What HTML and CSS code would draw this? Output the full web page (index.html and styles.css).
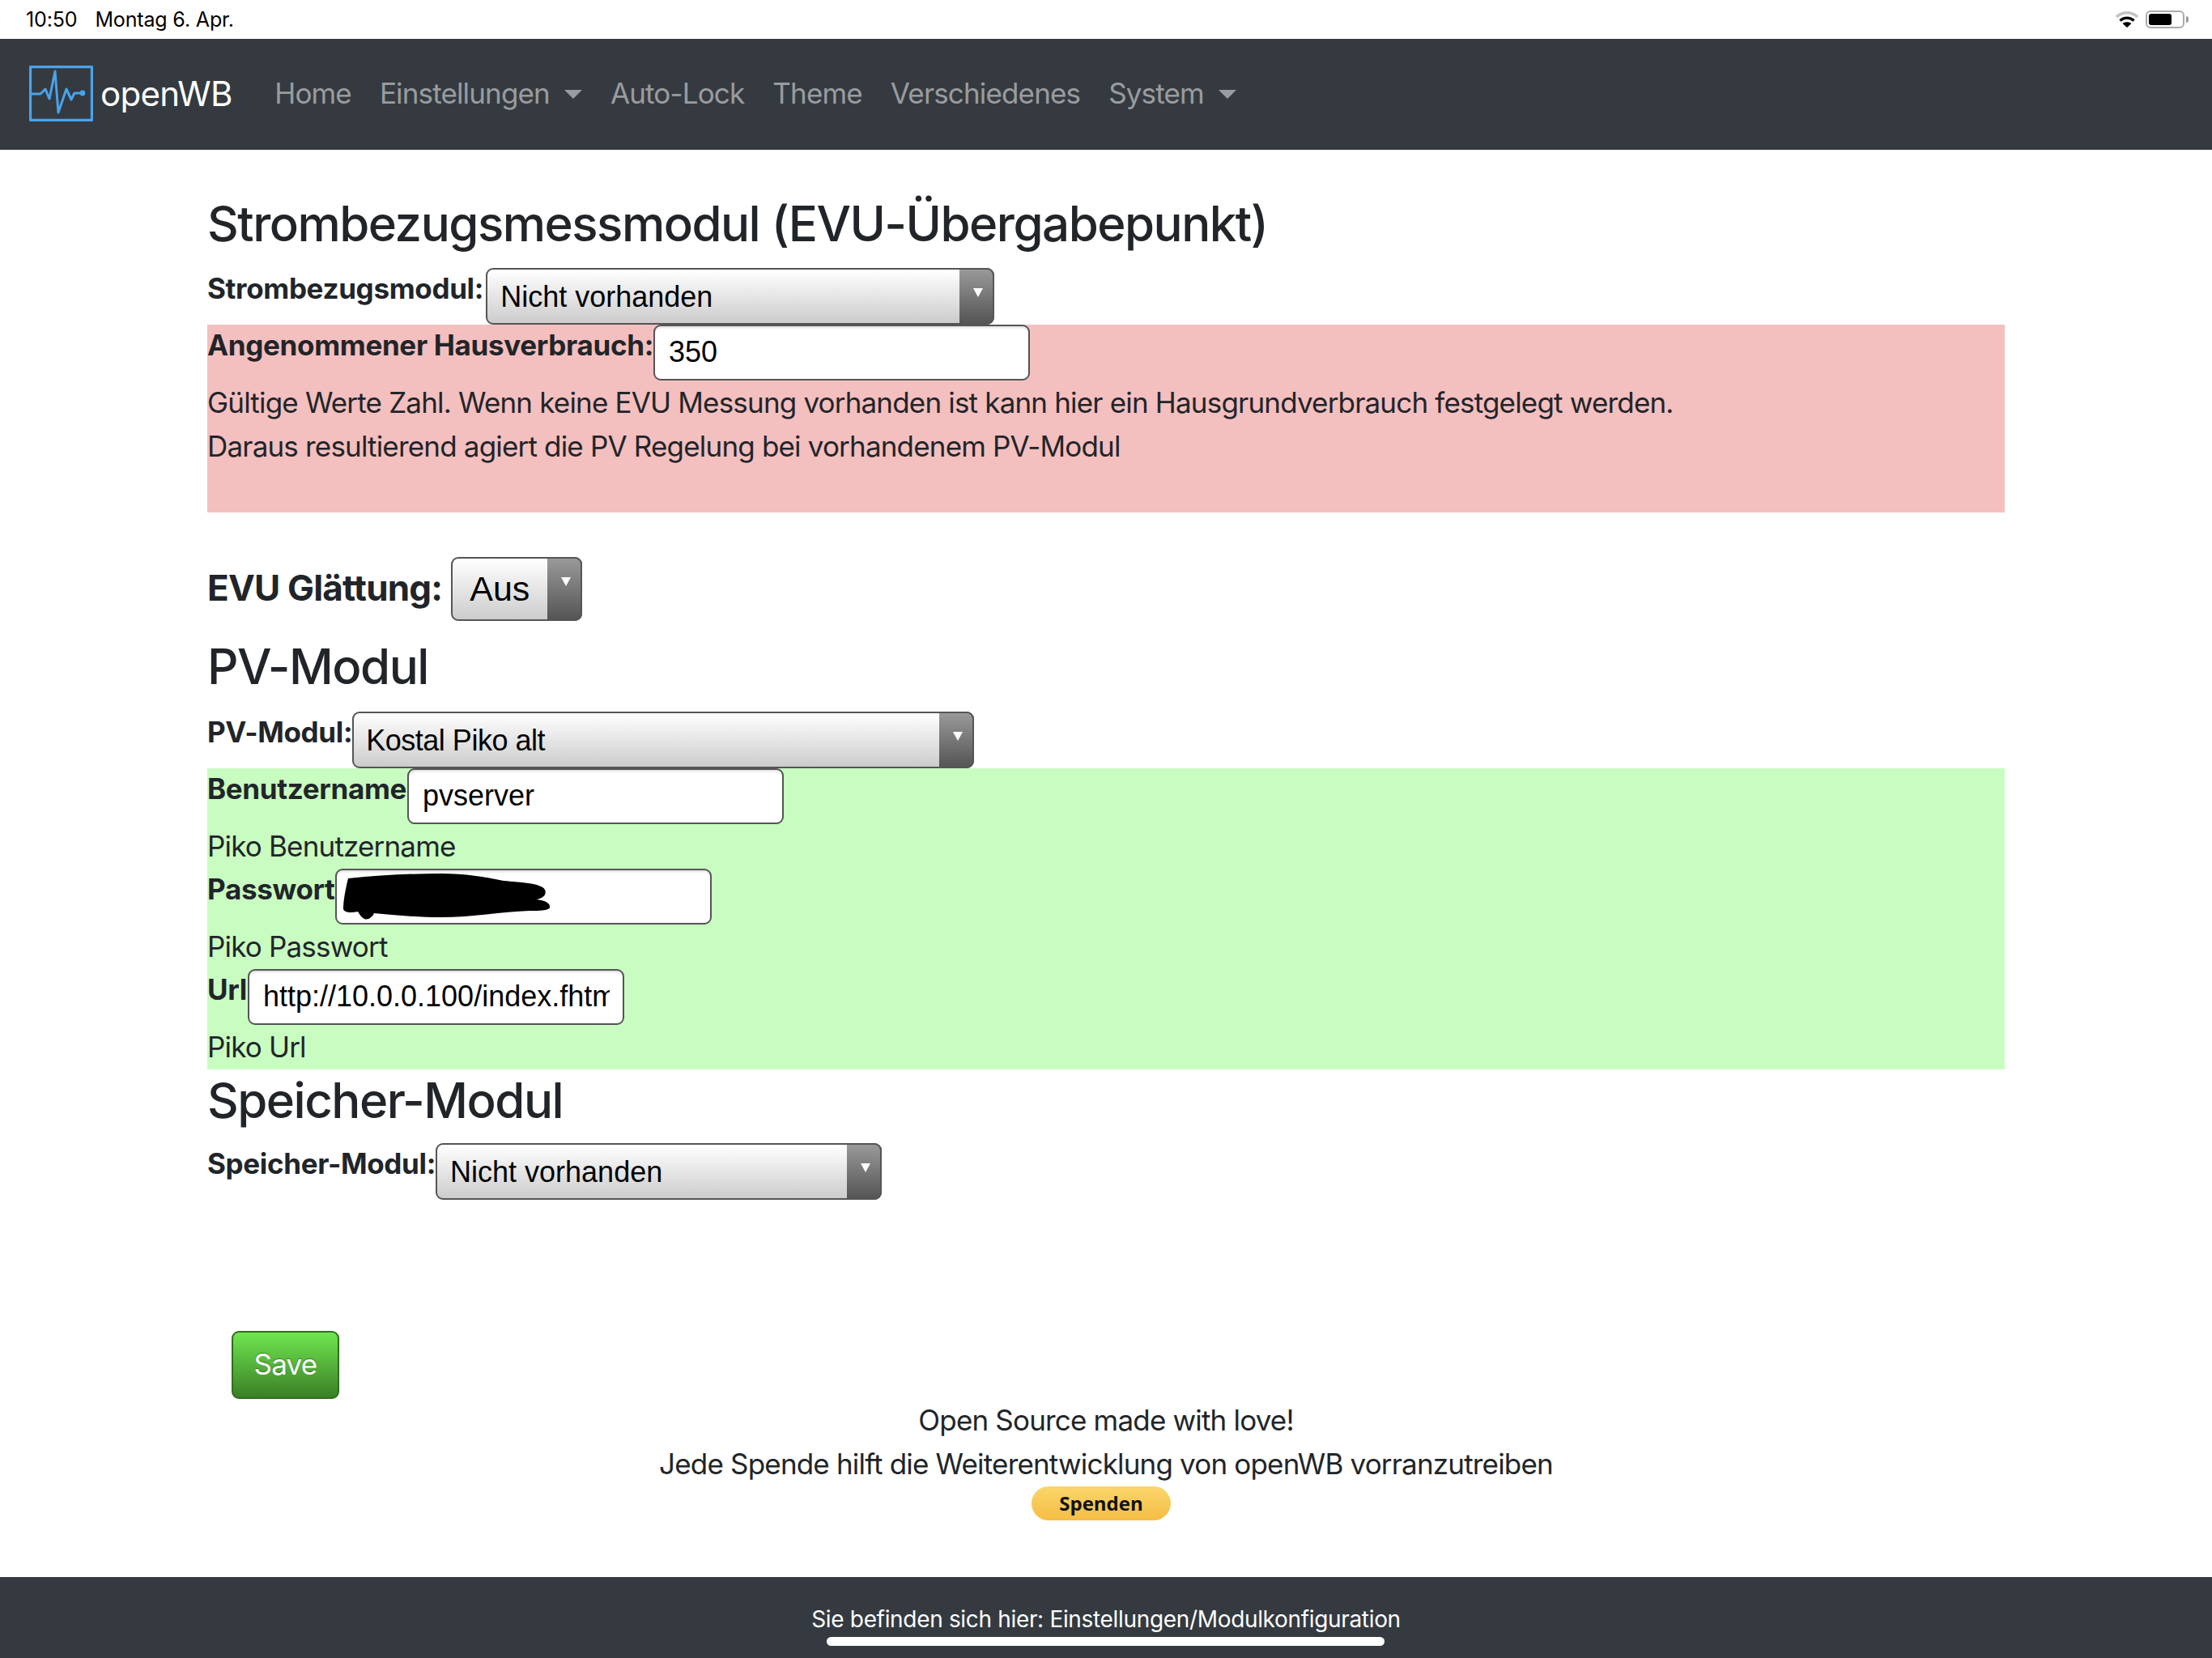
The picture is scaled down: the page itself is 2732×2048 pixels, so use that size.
FILE: index.html
```html
<!DOCTYPE html>
<html lang="de">
<head>
<meta charset="utf-8">
<title>openWB</title>
<link rel="stylesheet" href="styles.css">
</head>
<body>
<div class="statusbar">
  <div class="status-left"><span>10:50</span><span>Montag 6. Apr.</span></div>
  <div class="status-right">
    <svg class="wifi" width="28" height="22" viewBox="0 0 28 22"><path d="M1 8 C8 1 20 1 27 8" fill="none" stroke="#c4c4c4" stroke-width="3.4"/><path d="M5.5 12.5 C10 8 18 8 22.5 12.5" fill="none" stroke="#000" stroke-width="3.4"/><path d="M14 21 L8.5 16 C11.5 13.6 16.5 13.6 19.5 16 Z" fill="#000"/></svg>
    <div class="battery"><div class="battery-fill"></div></div><div class="battery-tip"></div>
  </div>
</div>
<nav class="navbar">
  <a class="brand" href="#">
    <svg class="logo" width="79" height="69" viewBox="0 0 79 69"><rect x="1.5" y="1.5" width="76" height="66" rx="1" fill="none" stroke="#4aa3ea" stroke-width="3.4"/><path d="M1 35 L14 35 L20 29 L25 41 L32 7 L36 58 L46 29 L52 42 L56 34 L66 34" fill="none" stroke="#4aa3ea" stroke-width="3" stroke-linejoin="round"/><circle cx="66" cy="34" r="3.4" fill="#4aa3ea"/></svg>
    <span class="brand-name">openWB</span>
  </a>
  <ul class="nav">
    <li><a href="#">Home</a></li>
    <li><a class="caret" href="#">Einstellungen</a></li>
    <li><a href="#">Auto-Lock</a></li>
    <li><a href="#">Theme</a></li>
    <li><a href="#">Verschiedenes</a></li>
    <li><a class="caret" href="#">System</a></li>
  </ul>
</nav>
<main class="content">
  <h3 class="first">Strombezugsmessmodul (EVU-Übergabepunkt)</h3>
  <div class="row">
    <label class="wide">Strombezugsmodul:</label>
    <div class="selectbox w628"><select><option>Nicht vorhanden</option></select></div>
  </div>
  <section class="block pink">
    <div class="row">
      <label>Angenommener Hausverbrauch:</label>
      <input class="field" type="text" value="350">
    </div>
    <p>Gültige Werte Zahl. Wenn keine EVU Messung vorhanden ist kann hier ein Hausgrundverbrauch festgelegt werden.</p>
    <p>Daraus resultierend agiert die PV Regelung bei vorhandenem PV-Modul</p>
    <p class="blank">&nbsp;</p>
  </section>
  <div class="row large">
    <label>EVU Glättung:</label>
    <div class="selectbox w162"><select><option>Aus</option></select></div>
  </div>
  <h3>PV-Modul</h3>
  <div class="row">
    <label>PV-Modul:</label>
    <div class="selectbox w768"><select class="narrow"><option>Kostal Piko alt</option></select></div>
  </div>
  <section class="block green">
    <div class="row">
      <label class="nudge">Benutzername</label>
      <input class="field" type="text" value="pvserver">
    </div>
    <p>Piko Benutzername</p>
    <div class="row">
      <label>Passwort</label>
      <div class="pw">
        <input class="field" type="text" value="">
        <svg class="scribble" width="256" height="58" viewBox="0 0 256 58"><path d="M6 6 C45 2 85 0 121 0 C150 0 175 4 198 9 C220 11 245 12 249 20 C252 27 245 31 238 32 C250 33 256 37 255 42 C254 46 240 46 230 46 C195 47 160 54 121 54 C90 54 60 51 38 49 C36 54 30 58 26 56 C22 54 20 50 18 47 C8 49 0 48 0 43 C0 35 2 22 6 6 Z" fill="#000"/></svg>
      </div>
    </div>
    <p>Piko Passwort</p>
    <div class="row">
      <label class="nudge">Url</label>
      <input class="field" type="text" value="http://10.0.0.100/index.fhtml">
    </div>
    <p>Piko Url</p>
  </section>
  <h3 class="tight">Speicher-Modul</h3>
  <div class="row">
    <label>Speicher-Modul:</label>
    <div class="selectbox w551"><select><option>Nicht vorhanden</option></select></div>
  </div>
  <button class="save" type="button">Save</button>
  <div class="donate">
    <p>Open Source made with love!</p>
    <p>Jede Spende hilft die Weiterentwicklung von openWB vorranzutreiben</p>
    <button class="spenden" type="button">Spenden</button>
  </div>
</main>
<footer class="footer">
  <span>Sie befinden sich hier: Einstellungen/Modulkonfiguration</span>
  <div class="home-indicator"></div>
</footer>
</body>
</html>
```
FILE: styles.css
```css
* { box-sizing: border-box; }
html, body { margin: 0; padding: 0; }
body {
  position: relative;
  width: 2732px;
  height: 2048px;
  overflow: hidden;
  background: #fff;
  color: #212529;
  font-family: Inter, "Liberation Sans", sans-serif;
  font-size: 35px;
  letter-spacing: -0.82px;
  line-height: 54px;
}
.statusbar {
  height: 48px;
  padding: 0 29px 0 32px;
  display: flex;
  justify-content: space-between;
  align-items: center;
  color: #000;
  font-size: 25px;
  letter-spacing: -0.15px;
  line-height: 48px;
}
.status-left { display: flex; gap: 22px; }
.status-right { display: flex; align-items: center; }
.wifi { margin-right: 9px; }
.battery {
  width: 48px;
  height: 22px;
  border: 2px solid #aaa;
  border-radius: 6px;
  padding: 2px;
}
.battery-fill { width: 28px; height: 100%; background: #000; border-radius: 3px; }
.battery-tip { width: 3px; height: 8px; margin-left: 2px; background: #999; border-radius: 0 3px 3px 0; }
.navbar {
  height: 137px;
  padding: 0 0 3px 36px;
  background: #343a40;
  display: flex;
  align-items: center;
}
.brand { display: flex; align-items: center; color: #fff; text-decoration: none; }
.brand-name { font-size: 42px; letter-spacing: -0.7px; margin-left: 9px; line-height: 69px; }
.logo { display: block; }
.nav { list-style: none; display: flex; margin: 0 0 0 35px; padding: 0; letter-spacing: -0.85px; }
.nav a { display: block; padding: 0 17.5px; color: rgba(255,255,255,.5); text-decoration: none; }
.caret::after {
  content: "";
  display: inline-block;
  margin-left: 18px;
  vertical-align: 6px;
  border-top: 11px solid;
  border-left: 11px solid transparent;
  border-right: 11px solid transparent;
}
.content { padding: 53px 256px 0; }
h3 {
  margin: 18px 0 18px;
  font-size: 60px;
  letter-spacing: -1.5px;
  line-height: 76px;
  font-weight: 500;
}
h3.first { margin: 0 0 17px; }
h3.tight { margin: 0 0 15px; }
.row { display: flex; align-items: flex-start; }
.row label { font-weight: 700; letter-spacing: -0.33px; line-height: 50px; }
.row label.wide { margin-right: 3px; }
.row label.nudge { margin-right: 1px; }
.row.large label { font-size: 44px; letter-spacing: -0.8px; line-height: 77px; margin-right: 11px; }
.selectbox {
  position: relative;
  height: 70px;
}
.selectbox select {
  appearance: none;
  -webkit-appearance: none;
  display: block;
  width: 100%;
  height: 100%;
  border: 2px solid #555;
  border-radius: 9px;
  background: linear-gradient(#fff, #ccc);
  color: #000;
  font-family: "Liberation Sans", sans-serif;
  font-size: 36px;
  padding: 0 0 0 16px;
}
.selectbox select.narrow { letter-spacing: -0.5px; padding-left: 15px; }
.selectbox::after {
  content: "";
  position: absolute;
  top: 0;
  right: 0;
  bottom: 0;
  width: 41px;
  border-radius: 0 9px 9px 0;
  border: 2px solid #555;
  border-left: 0;
  background: linear-gradient(#999, #555);
}
.selectbox::before {
  content: "";
  position: absolute;
  z-index: 1;
  top: 25px;
  right: 14px;
  border-top: 11px solid #fff;
  border-left: 6px solid transparent;
  border-right: 6px solid transparent;
}
.w628 { width: 628px; }
.w768 { width: 768px; }
.w551 { width: 551px; }
.w162 { width: 162px; height: 79px; }
.w162 select { font-size: 43px; padding: 0 0 2px 21px; }
.field {
  display: block;
  width: 465px;
  height: 69px;
  border: 2px solid #555;
  border-radius: 9px;
  background: #fff;
  box-shadow: inset 0 3px 3px -1px rgba(0,0,0,.12);
  color: #000;
  font-family: "Liberation Sans", sans-serif;
  font-size: 36px;
  padding: 0 16px 2px 17px;
}
.pw { position: relative; }
.scribble { position: absolute; top: 6px; left: 10px; }
.block p { margin: 0; }
.pink { background: #f4bfbf; margin-bottom: 55px; height: 232px; }
.green { background: #c9fcc1; height: 372px; }
.green .row + p { height: 55px; }
.save {
  display: block;
  width: 133px;
  height: 84px;
  margin: 162px 0 0 30px;
  padding: 0 0 2px;
  border: 2px solid #2f6f1c;
  border-radius: 9px;
  background: linear-gradient(#70e650, #3a7f26);
  color: #fff;
  font-family: Inter, "Liberation Sans", sans-serif;
  font-size: 35px;
  letter-spacing: -0.8px;
  text-shadow: 0 -1px 1px rgba(0,0,0,.35);
}
.donate { margin-top: -1px; text-align: center; }
.donate p { margin: 0; }
.spenden {
  display: block;
  width: 172px;
  height: 42px;
  margin: 1px 0 0 1018px;
  padding: 0;
  border: 0;
  border-radius: 21px;
  background: linear-gradient(#fbd56b, #f5bd45);
  color: #111;
  font-family: "Open Sans", sans-serif;
  font-weight: 700;
  font-size: 24px;
  line-height: 40px;
}
.footer {
  position: absolute;
  left: 0;
  right: 0;
  bottom: 0;
  height: 100px;
  background: #343a40;
  color: #fff;
  text-align: center;
  font-size: 28px;
  letter-spacing: -0.33px;
  line-height: 104px;
}
.home-indicator {
  position: absolute;
  left: 1021px;
  top: 74px;
  width: 689px;
  height: 11px;
  border-radius: 6px;
  background: #fff;
}
```
